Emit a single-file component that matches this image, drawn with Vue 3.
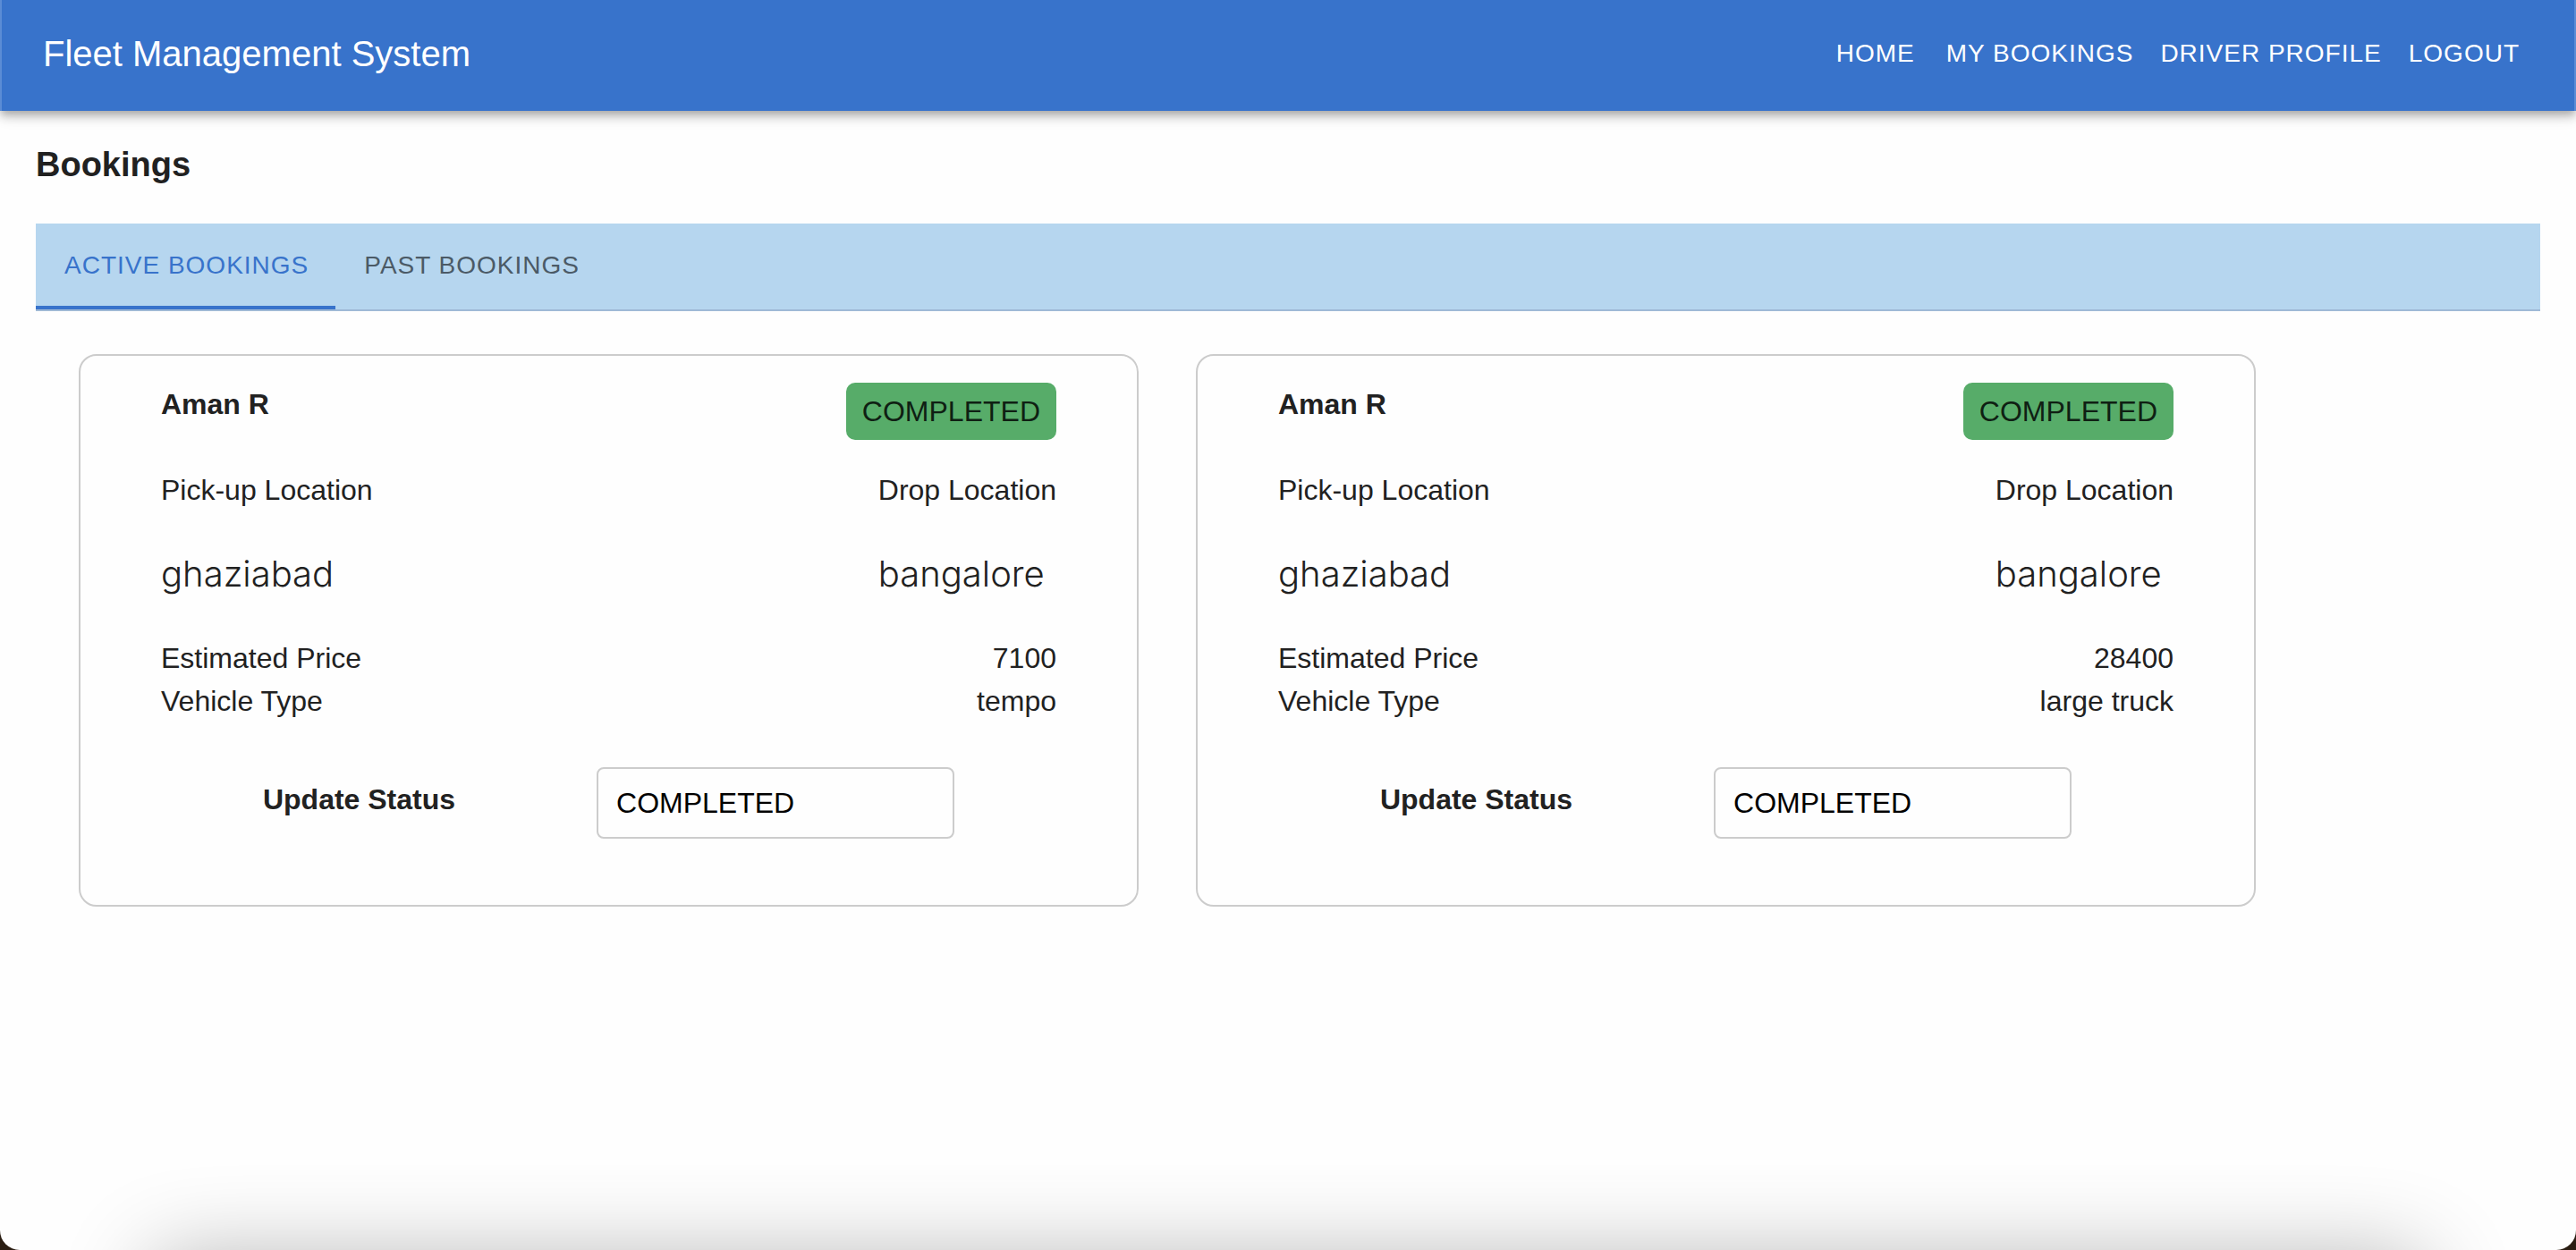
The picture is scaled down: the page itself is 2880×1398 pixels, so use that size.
<script setup>
import { ref } from 'vue'

const links = ['Home', 'My Bookings', 'Driver Profile', 'Logout']
const tabs = ['Active Bookings', 'Past Bookings']
const activeTab = ref(0)

const statuses = ['PENDING', 'ACCEPTED', 'COMPLETED']
const bookings = ref([
  { id: 1, name: 'Aman R', pickup: 'ghaziabad', drop: 'bangalore', price: 7100, vehicle: 'tempo', status: 'COMPLETED' },
  { id: 2, name: 'Aman R', pickup: 'ghaziabad', drop: 'bangalore', price: 28400, vehicle: 'large truck', status: 'COMPLETED' },
])
</script>

<template>
  <div class="window">
    <header class="appbar">
      <div class="brand">Fleet Management System</div>
      <nav class="nav">
        <a v-for="link in links" :key="link" href="#" class="nav-link">{{ link }}</a>
      </nav>
    </header>

    <main class="main">
      <h1 class="title">Bookings</h1>

      <div class="tabs" role="tablist">
        <button
          v-for="(tab, i) in tabs"
          :key="tab"
          type="button"
          role="tab"
          class="tab"
          :class="{ active: i === activeTab }"
          :aria-selected="i === activeTab"
          @click="activeTab = i"
        >{{ tab }}</button>
      </div>

      <section class="cards">
        <article v-for="b in bookings" :key="b.id" class="card">
          <div class="row head">
            <h2 class="name">{{ b.name }}</h2>
            <span class="badge">{{ b.status }}</span>
          </div>
          <div class="row places">
            <div>
              <div>Pick-up Location</div>
              <div class="place">{{ b.pickup }}</div>
            </div>
            <div>
              <div>Drop Location</div>
              <div class="place">{{ b.drop }}</div>
            </div>
          </div>
          <div class="row">
            <span>Estimated Price</span>
            <span>{{ b.price }}</span>
          </div>
          <div class="row">
            <span>Vehicle Type</span>
            <span>{{ b.vehicle }}</span>
          </div>
          <div class="update">
            <label class="update-label" :for="`status-${b.id}`">Update Status</label>
            <select :id="`status-${b.id}`" v-model="b.status" class="select">
              <option v-for="s in statuses" :key="s" :value="s">{{ s }}</option>
            </select>
          </div>
        </article>
      </section>
    </main>

    <div class="dock-shadow"></div>
  </div>
</template>

<style>
body {
  background: #2a1d12;
}
</style>

<style scoped>
.window {
  position: relative;
  box-sizing: border-box;
  min-height: 100vh;
  overflow: hidden;
  background: #fefefe;
  border-radius: 0 0 22px 22px;
  color: #212121;
  font-family: "Liberation Sans", Arial, Helvetica, sans-serif;
  font-size: 32px;
  line-height: 48px;
}

.appbar {
  display: flex;
  align-items: center;
  justify-content: space-between;
  box-sizing: border-box;
  height: 124px;
  padding: 0 46px 4px;
  background: #3873cb;
  border: 0 solid #5b8cd5;
  border-width: 0 2px;
  color: #fff;
  box-shadow: 0 4px 8px -2px rgba(0, 0, 0, 0.2), 0 8px 10px 0 rgba(0, 0, 0, 0.14), 0 2px 20px 0 rgba(0, 0, 0, 0.12);
}

.brand {
  font-size: 40px;
}

.nav {
  display: flex;
}

.nav-link {
  box-sizing: border-box;
  min-width: 128px;
  padding: 0 15px;
  color: inherit;
  font-size: 28px;
  letter-spacing: 1px;
  text-align: center;
  text-decoration: none;
  text-transform: uppercase;
}

.main {
  padding: 36px 40px 0;
}

.title {
  margin: 0 0 42px;
  font-size: 38px;
  font-weight: 700;
  line-height: 48px;
}

.tabs {
  display: flex;
  background: #b6d6ef;
  border-bottom: 2px solid #9fb9d6;
}

.tab {
  height: 96px;
  padding: 2px 30px 0 32px;
  border: 0;
  border-bottom: 4px solid transparent;
  background: none;
  color: #4b5a66;
  font: 28px "Liberation Sans", Arial, Helvetica, sans-serif;
  letter-spacing: 1px;
  text-transform: uppercase;
}

.tab.active {
  border-bottom-color: #3873cb;
  color: #3873cb;
}

.cards {
  display: grid;
  grid-template-columns: 1fr 1fr;
  gap: 64px;
  padding: 48px 318px 48px 48px;
}

.card {
  padding: 30px 90px 74px;
  border: 2px solid #ccc;
  border-radius: 20px;
}

.row {
  display: flex;
  align-items: flex-start;
  justify-content: space-between;
}

.head {
  margin-bottom: 32px;
}

.name {
  margin: 0;
  font-size: 32px;
  font-weight: 700;
}

.badge {
  padding: 8px 18px;
  border-radius: 10px;
  background: #57ac69;
  color: #0f1f13;
}

.places {
  margin-bottom: 40px;
}

.place {
  margin-top: 40px;
  font-family: Inter, "Liberation Sans", sans-serif;
  font-size: 40px;
  font-weight: 300;
  line-height: 60px;
}

.update {
  display: flex;
  align-items: center;
  justify-content: center;
  gap: 158px;
  margin-top: 50px;
}

.update-label {
  font-weight: 700;
  padding-bottom: 8px;
}

.select {
  appearance: none;
  box-sizing: border-box;
  width: 400px;
  height: 80px;
  padding: 0 20px;
  border: 2px solid #ccc;
  border-radius: 8px;
  background: #fefefe;
  color: #000;
  font: 32px "Liberation Sans", Arial, Helvetica, sans-serif;
}

/* Soft shade along the lower edge, cast from just below the window */
.dock-shadow {
  position: absolute;
  right: 170px;
  bottom: -210px;
  left: 170px;
  height: 200px;
  border-radius: 20px;
  box-shadow: 0 0 100px rgba(0, 0, 0, 0.3);
  pointer-events: none;
}
</style>
